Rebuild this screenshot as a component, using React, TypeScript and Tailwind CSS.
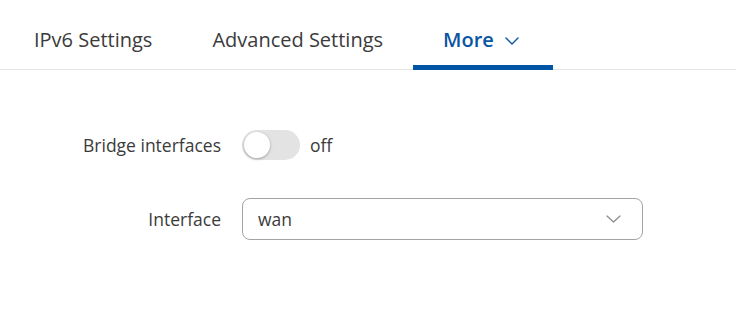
import React from "react";

export default function App() {
  return (
    <div className="w-[736px] h-[317px] bg-white text-[#3b3b3b] font-['Open_Sans',sans-serif]">
      <div className="flex h-[70px] border-b border-[#e5e5e5] pl-[4px]">
        <div className="flex items-center px-[30px] pt-[10px] text-[20px]">IPv6 Settings</div>
        <div className="flex items-center px-[30px] pt-[10px] text-[20px]">Advanced Settings</div>
        <div className="flex items-center pl-[30px] pr-[34px] pt-[15px] -mb-px border-b-[5px] border-[#0055a6] text-[20px] font-semibold text-[#0a55a3]">
          More
          <svg className="ml-[11px] mt-[2px]" width="14" height="8" viewBox="0 0 14 8" fill="none">
            <path d="M1 1l6 6 6-6" stroke="#0a55a3" strokeWidth="1.4" strokeLinecap="round" strokeLinejoin="round" />
          </svg>
        </div>
      </div>
      <div className="pt-[60px] flex flex-col gap-[38px]">
        <div className="flex items-center h-[30px]">
          <div className="w-[221px] text-right text-[17.5px]">Bridge interfaces</div>
          <div className="ml-[21px] flex items-center">
            <div className="relative w-[58px] h-[30px] rounded-full bg-[#e3e3e3]">
              <div className="absolute left-[2px] top-[2px] w-[26px] h-[26px] rounded-full bg-white shadow-[0_1px_3px_rgba(0,0,0,0.3)]" />
            </div>
            <span className="ml-[10px] text-[17.5px]">off</span>
          </div>
        </div>
        <div className="flex items-center h-[42px]">
          <div className="w-[221px] text-right text-[17.5px]">Interface</div>
          <div className="ml-[21px] w-[401px] h-[42px] border border-[#a3a3a3] rounded-[8px] flex items-center justify-between pl-[15px] pr-[21px]">
            <span className="text-[17.5px]">wan</span>
            <svg width="15" height="8" viewBox="0 0 15 8" fill="none">
              <path d="M1 1l6.5 6 6.5-6" stroke="#8a8a8a" strokeWidth="1.2" strokeLinecap="round" strokeLinejoin="round" />
            </svg>
          </div>
        </div>
      </div>
    </div>
  );
}
